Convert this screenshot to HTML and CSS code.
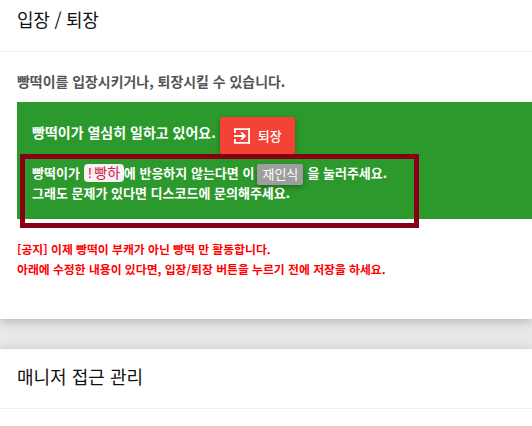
FILE: index.html
```html
<!DOCTYPE html>
<html lang="ko">
<head>
<meta charset="utf-8">
<title>입장 / 퇴장</title>
<link rel="stylesheet" href="styles.css">
</head>
<body>
<section class="card card-access">
  <header class="card-header"><h2>입장 / 퇴장</h2></header>
  <div class="card-body">
    <p class="description">빵떡이를 입장시키거나, 퇴장시킬 수 있습니다.</p>
    <div class="status">
      <div class="status-row">
        <span class="status-text">빵떡이가 열심히 일하고 있어요.</span>
        <button class="leave"><svg viewBox="0 0 18 18" width="18" height="18" fill="none" stroke="currentColor" stroke-width="1.8"><path d="M1.9 6V2.2h14.2v13.6H1.9V12M1 9h10.5M8.2 5.3 11.9 9l-3.7 3.7"/></svg><span>퇴장</span></button>
      </div>
      <div class="help">
        <p class="help-line"><span>빵떡이가</span><code>!빵하</code><span>에 반응하지 않는다면 이</span><button class="retry">재인식</button><span>을 눌러주세요.</span></p>
        <p class="help-line">그래도 문제가 있다면 디스코드에 문의해주세요.</p>
      </div>
      <div class="highlight"></div>
    </div>
    <p class="notice">[공지] 이제 빵떡이 부캐가 아닌 빵떡 만 활동합니다.<br>아래에 수정한 내용이 있다면, 입장/퇴장 버튼을 누르기 전에 저장을 하세요.</p>
  </div>
</section>
<section class="card card-manager">
  <header class="card-header"><h2>매니저 접근 관리</h2></header>
</section>
</body>
</html>
```
FILE: styles.css
```css
* { box-sizing: border-box; margin: 0; padding: 0; }
body {
  height: 426px;
  overflow: hidden;
  background: #e8e8e8;
  font-family: "Noto Sans CJK KR", sans-serif;
  white-space: nowrap;
}
.card { background: #fff; box-shadow: 0 2px 10px rgba(0, 0, 0, .24); }
.card-access { height: 319px; }
.card-manager { margin-top: 30px; height: 77px; }
.card-header { padding-left: 17px; border-bottom: 1px solid #eee; }
.card-access .card-header { height: 52px; padding-top: 6px; }
.card-manager .card-header { height: 60px; padding-top: 14px; }
h2 { font-size: 18px; line-height: 26px; font-weight: 400; color: #111; }
.card-access h2 { letter-spacing: -.25px; }
.card-body { padding: 19px 0 0 17px; }
.description { font-size: 13.95px; line-height: 20px; font-weight: 700; color: #555; }
.status {
  position: relative;
  height: 117px;
  margin-top: 11px;
  padding: 15px 0 0 15px;
  background: #2b992b;
  color: #fff;
  font-size: 14px;
  font-weight: 700;
}
.status-row { display: flex; align-items: center; gap: 4px; height: 37px; }
.status-text { padding-bottom: 7px; }
button { border: 0; border-radius: 2px; color: #fff; font-family: inherit; box-shadow: 0 2px 5px rgba(0, 0, 0, .3); }
.leave {
  display: flex;
  align-items: center;
  gap: 7px;
  width: 75px;
  height: 37px;
  padding-left: 13px;
  background: #f44336;
  font-size: 13px;
  font-weight: 500;
}
.help { padding-top: 9px; font-size: 13px; }
.help-line { display: flex; align-items: center; height: 20px; line-height: 20px; }
code {
  height: 18px;
  margin-left: 4px;
  width: 40px;
  padding-left: 2px;
  border-radius: 4px;
  background: #f9f2f4;
  color: #c7254e;
  font: 400 14px/20px "Liberation Mono", "Noto Sans CJK KR", monospace;
}
.retry { width: 46px; height: 21px; margin: 2px 4px 0 3px; background: #9e9e9e; font-size: 13px; line-height: 20px; }
.highlight { position: absolute; left: 3px; top: 52px; width: 399px; height: 74px; border: 5px solid #880015; }
.notice { margin-top: 20px; font-size: 11.83px; line-height: 20px; font-weight: 700; color: #f00; }
```
